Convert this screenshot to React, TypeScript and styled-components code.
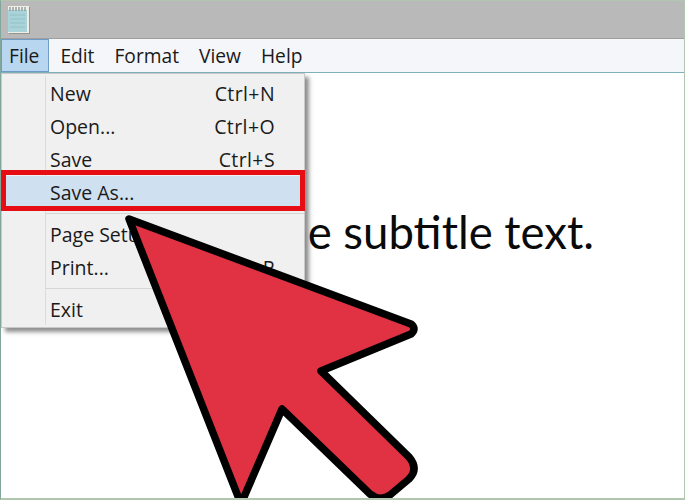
import React from "react";
import styled, { createGlobalStyle } from "styled-components";

const Global = createGlobalStyle`
  html, body { margin: 0; padding: 0; background: #fff; }
  #root { width: 685px; height: 500px; overflow: hidden; }
`;

const Window = styled.div`
  position: relative;
  box-sizing: border-box;
  width: 685px;
  height: 500px;
  display: flex;
  flex-direction: column;
  overflow: hidden;
  background: #fff;
  border: 1px solid #b1c6af;
  border-bottom-width: 2px;
  border-left-color: #7fa79a;
  font-family: "Open Sans", "Noto Sans", sans-serif;
  color: #1a1a1a;
`;

const TitleBar = styled.div`
  height: 37px;
  flex: none;
  display: flex;
  align-items: center;
  padding-left: 6px;
  background: #b9b9b9;
  border-bottom: 1px solid #9f9f9f;
`;

const MenuBar = styled.div`
  height: 33px;
  flex: none;
  display: flex;
  align-items: stretch;
  background: #f5f6f9;
  border-bottom: 1px solid #7db2bd;
  font-size: 19.2px;
`;

const MenuTitle = styled.div<{ $open?: boolean }>`
  box-sizing: border-box;
  display: flex;
  align-items: center;
  padding: ${(p) => (p.$open ? "0 9px 0 7px" : "0 10px")};
  margin-right: ${(p) => (p.$open ? "1px" : "0")};
  background: ${(p) => (p.$open ? "#b9d6f0" : "transparent")};
  border: ${(p) => (p.$open ? "1px solid #6f9cc6" : "none")};
`;

const Document = styled.div`
  flex: 1;
  display: flex;
  justify-content: flex-end;
  padding: 135px 90px 0 0;
  font-family: "Lato", "Open Sans", sans-serif;
  font-size: 45.5px;
  line-height: 48px;
  color: #0a0a0a;
  white-space: nowrap;
`;

const Menu = styled.div`
  position: absolute;
  left: 0;
  top: 72px;
  box-sizing: border-box;
  width: 304px;
  height: 255px;
  padding: 3px 0 0;
  background: #f0f0f0;
  border: 1px solid #c9c9c9;
  box-shadow: 4px 4px 4px rgba(70, 70, 70, 0.6);
  display: flex;
  flex-direction: column;
  font-size: 19.5px;
  &::before {
    content: "";
    position: absolute;
    left: 43px;
    top: 2px;
    bottom: 2px;
    width: 1px;
    background: #dcdcdc;
  }
`;

const Item = styled.div<{ $selected?: boolean }>`
  height: 33px;
  flex: none;
  box-sizing: border-box;
  display: flex;
  align-items: center;
  justify-content: space-between;
  padding: 0 29px 0 48px;
  ${(p) => (p.$selected ? "background: #cfe0f1;" : "")}
`;

const Shortcut = styled.span`
  letter-spacing: 0.4px;
`;

const Separator = styled.div<{ $h: number }>`
  height: ${(p) => p.$h}px;
  flex: none;
  display: flex;
  align-items: center;
  padding-left: 44px;
  &::after {
    content: "";
    flex: 1;
    height: 1px;
    background: #d6d6d6;
  }
`;

const Highlight = styled.div`
  position: absolute;
  left: 0;
  top: 169px;
  box-sizing: border-box;
  width: 304px;
  height: 41px;
  border: 5px solid #e60d14;
`;

const Arrow = styled.svg`
  position: absolute;
  left: 0;
  top: 0;
`;

const NotepadIcon = () => (
  <svg width="24" height="30" viewBox="0 0 24 30">
    <rect x="2" y="2" width="21" height="27" fill="#6f6f68" opacity="0.5" />
    <rect x="1" y="1" width="21" height="27" fill="#eeeee6" />
    <rect x="1" y="5" width="19" height="22" fill="#a9d3d8" />
    <path d="M3 2v4M6 2v4M9 2v4M12 2v4M15 2v4M18 2v4" stroke="#7f8f90" strokeWidth="1.2" />
    <path d="M3 10h15M3 14h15M3 18h15M3 22h15" stroke="#92c2c8" strokeWidth="1" />
  </svg>
);

export default function App() {
  return (
    <>
      <Global />
      <Window>
        <TitleBar>
          <NotepadIcon />
        </TitleBar>
        <MenuBar>
          <MenuTitle $open>File</MenuTitle>
          <MenuTitle>Edit</MenuTitle>
          <MenuTitle>Format</MenuTitle>
          <MenuTitle>View</MenuTitle>
          <MenuTitle>Help</MenuTitle>
        </MenuBar>
        <Document>Some subtitle text.</Document>
        <Menu>
          <Item>
            <span>New</span>
            <Shortcut>Ctrl+N</Shortcut>
          </Item>
          <Item>
            <span>Open...</span>
            <Shortcut>Ctrl+O</Shortcut>
          </Item>
          <Item>
            <span>Save</span>
            <Shortcut>Ctrl+S</Shortcut>
          </Item>
          <Item $selected>
            <span>Save As...</span>
          </Item>
          <Separator $h={9} />
          <Item>
            <span>Page Setup...</span>
          </Item>
          <Item>
            <span>Print...</span>
            <Shortcut>Ctrl+P</Shortcut>
          </Item>
          <Separator $h={9} />
          <Item>
            <span>Exit</span>
          </Item>
        </Menu>
        <Highlight />
        <Arrow width="685" height="500" viewBox="0 0 685 500">
          <path
            d="M128 218 L410 323 Q416 328 410 333 L320 370 L408 456 Q418 468 408 478 L389 494 Q379 501 369 493 L281 408 L240 503 Z"
            fill="#e03243"
            stroke="#000"
            strokeWidth="7.5"
            strokeLinejoin="round"
          />
        </Arrow>
      </Window>
    </>
  );
}
